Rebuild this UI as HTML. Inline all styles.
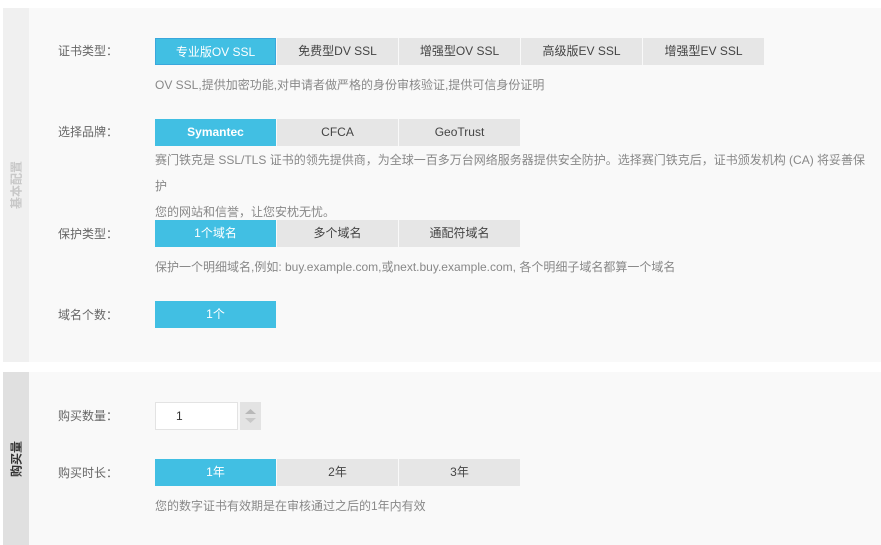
<!DOCTYPE html>
<html><head><meta charset="utf-8"><style>
*{margin:0;padding:0;box-sizing:border-box}
body{width:881px;height:545px;background:#fff;font-family:"Liberation Sans","Noto Sans CJK SC",sans-serif;position:relative;overflow:hidden}
.sec{position:absolute;left:3px;right:0;background:#f9f9f9}
.side{position:absolute;left:0;top:0;bottom:0;width:26px}
.side span{position:absolute;left:50%;top:50%;transform:translate(-50%,-50%) rotate(-90deg);white-space:nowrap;font-size:12px;font-weight:bold}
.a{position:absolute}
.lbl{position:absolute;left:58px;font-size:12px;color:#666;line-height:14px}
.btn{position:absolute;height:27px;width:121px;background:#e6e6e6;color:#444;font-size:12px;line-height:27px;text-align:center}
.on{background:#41bfe3;color:#fff}
.desc{position:absolute;left:155px;font-size:12px;color:#888;line-height:26px}
</style></head><body>
<div class="sec" style="top:8px;height:354px"><div class="side" style="background:#f0f0f0"><span style="color:#c8c8c8">基本配置</span></div></div>
<div class="sec" style="top:372px;height:173px"><div class="side" style="background:#e0e0e0"><span style="color:#333">购买量</span></div></div>

<div class="lbl" style="top:44px">证书类型：</div>
<div class="btn on" style="left:155px;top:38px;border:1px solid #3aa7dc">专业版OV SSL</div>
<div class="btn" style="left:277px;top:38px">免费型DV SSL</div>
<div class="btn" style="left:399px;top:38px">增强型OV SSL</div>
<div class="btn" style="left:521px;top:38px">高级版EV SSL</div>
<div class="btn" style="left:643px;top:38px">增强型EV SSL</div>
<div class="desc" style="top:72px">OV SSL,提供加密功能,对申请者做严格的身份审核验证,提供可信身份证明</div>

<div class="lbl" style="top:125px">选择品牌：</div>
<div class="btn on" style="left:155px;top:119px;font-weight:bold">Symantec</div>
<div class="btn" style="left:277px;top:119px">CFCA</div>
<div class="btn" style="left:399px;top:119px">GeoTrust</div>
<div class="desc" style="top:147px;width:720px">赛门铁克是 SSL/TLS 证书的领先提供商，为全球一百多万台网络服务器提供安全防护。选择赛门铁克后，证书颁发机构 (CA) 将妥善保护<br>您的网站和信誉，让您安枕无忧。</div>

<div class="lbl" style="top:227px">保护类型：</div>
<div class="btn on" style="left:155px;top:220px">1个域名</div>
<div class="btn" style="left:277px;top:220px">多个域名</div>
<div class="btn" style="left:399px;top:220px">通配符域名</div>
<div class="desc" style="top:254px">保护一个明细域名,例如: buy.example.com,或next.buy.example.com, 各个明细子域名都算一个域名</div>

<div class="lbl" style="top:308px">域名个数：</div>
<div class="btn on" style="left:155px;top:301px">1个</div>

<div class="lbl" style="top:409px">购买数量：</div>
<div class="a" style="left:155px;top:402px;width:83px;height:28px;background:#fff;border:1px solid #e3e3e3;font-size:12px;line-height:26px;padding-left:20px;color:#333">1</div>
<div class="a" style="left:240px;top:402px;width:21px;height:28px;background:#e3e3e3">
<svg width="21" height="28"><path d="M5 12 L10.5 7 L16 12Z" fill="#b8b8b8"/><path d="M5 16 L10.5 21 L16 16Z" fill="#c8c8c8"/></svg></div>

<div class="lbl" style="top:466px">购买时长：</div>
<div class="btn on" style="left:155px;top:459px">1年</div>
<div class="btn" style="left:277px;top:459px">2年</div>
<div class="btn" style="left:399px;top:459px">3年</div>
<div class="desc" style="top:493px">您的数字证书有效期是在审核通过之后的1年内有效</div>
</body></html>
